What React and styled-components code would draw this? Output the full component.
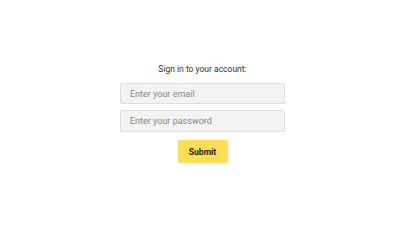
import React from "react";
import styled, { createGlobalStyle } from "styled-components";

const Global = createGlobalStyle`
  html, body { margin: 0; padding: 0; background: #ffffff; }
  body { font-family: Roboto, "Liberation Sans", Arial, sans-serif; }
`;

const Page = styled.div`
  width: 405px;
  height: 228px;
  display: flex;
  justify-content: center;
  padding-top: 63px;
  box-sizing: border-box;
`;

const Form = styled.form`
  display: flex;
  flex-direction: column;
  align-items: center;
  width: 165px;
`;

const Title = styled.div`
  font-size: 8.5px;
  color: #333333;
  line-height: 12px;
  margin-bottom: 8px;
  white-space: nowrap;
`;

const Input = styled.input`
  box-sizing: border-box;
  width: 165px;
  height: ${(p) => p.$h || 22}px;
  margin-bottom: ${(p) => p.$mb}px;
  padding: 0 9px;
  border: 1px solid #dedede;
  border-radius: 2px;
  background: #f3f3f3;
  font-family: Roboto, "Liberation Sans", Arial, sans-serif;
  font-size: 9px;
  color: #333;
  outline: none;
  &::placeholder { color: #868686; }
`;

const Button = styled.button`
  box-sizing: border-box;
  width: 50px;
  height: 23px;
  border: none;
  border-radius: 2px;
  background: #ffdd57;
  font-family: Roboto, "Liberation Sans", Arial, sans-serif;
  font-weight: bold;
  font-size: 8.5px;
  color: #222;
  padding: 0;
`;

export default function App() {
  return (
    <>
      <Global />
      <Page>
        <Form onSubmit={(e) => e.preventDefault()}>
          <Title>Sign in to your account:</Title>
          <Input type="email" placeholder="Enter your email" $mb={6} $h={21} />
          <Input type="password" placeholder="Enter your password" $mb={8} />
          <Button type="submit">Submit</Button>
        </Form>
      </Page>
    </>
  );
}
